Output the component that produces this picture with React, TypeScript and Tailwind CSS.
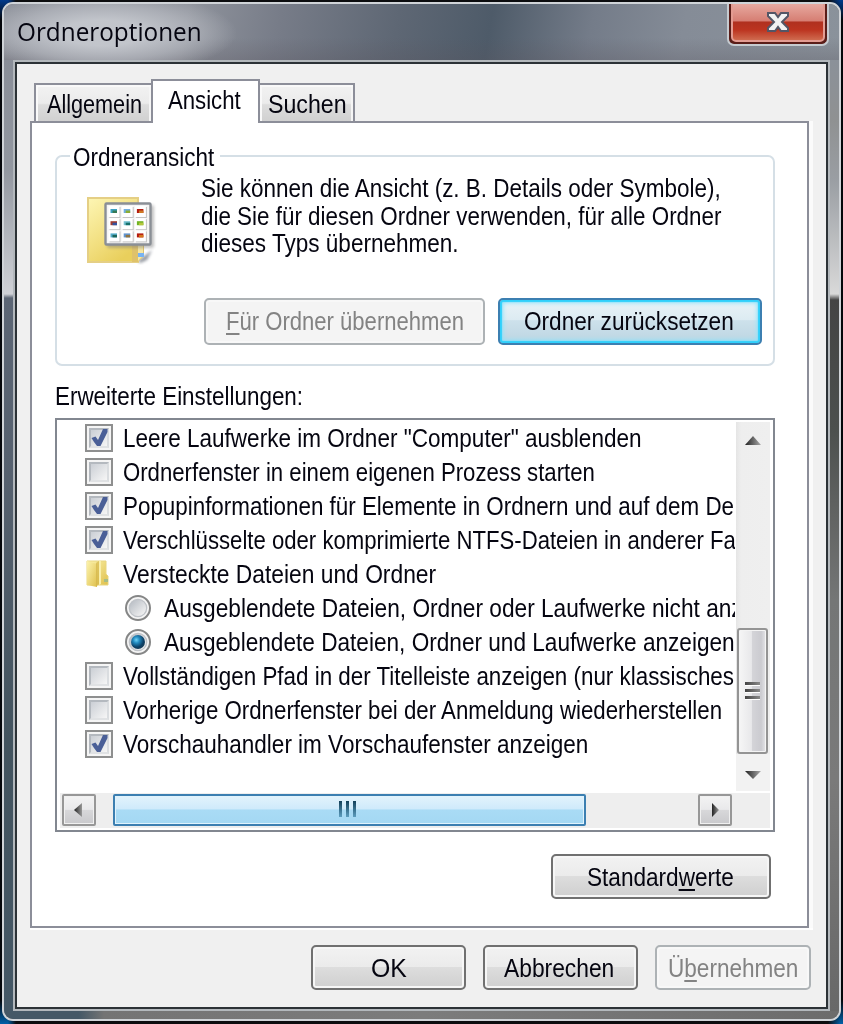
import React, { useLayoutEffect, useRef } from "react";

/** Single line of text condensed or stretched to fill the width of its box. */
function Fit({ className, children }: { className: string; children: React.ReactNode }) {
  const box = useRef<HTMLSpanElement>(null);
  const text = useRef<HTMLSpanElement>(null);
  useLayoutEffect(() => {
    if (box.current && text.current) {
      const scale = box.current.clientWidth / text.current.offsetWidth;
      text.current.style.transform = `scaleX(${scale})`;
    }
  }, []);
  return (
    <span ref={box} className={`block shrink-0 whitespace-nowrap ${className}`}>
      <span ref={text} className="inline-block origin-left">
        {children}
      </span>
    </span>
  );
}

function Key({ children }: { children: React.ReactNode }) {
  return <span className="underline decoration-2 underline-offset-[3px]">{children}</span>;
}

function Button({
  className,
  textClass,
  disabled = false,
  focused = false,
  children,
}: {
  className: string;
  textClass: string;
  disabled?: boolean;
  focused?: boolean;
  children: React.ReactNode;
}) {
  const look = disabled
    ? "border-[#adb2b5] bg-[#f4f4f4] text-[#838383] shadow-[inset_0_0_0_2px_#f8f8f8]"
    : focused
      ? "border-[#3c7fb1] bg-[linear-gradient(#eaf3f7_0%,#dcebf2_46%,#cde1eb_48%,#bcd5e2_100%)] shadow-[inset_0_0_1px_2px_#2fd0fb,inset_0_0_4px_3px_#8fe2fb]"
      : "border-[#707070] bg-[linear-gradient(#f2f2f2_0%,#ebebeb_48%,#dddddd_50%,#cfcfcf_100%)] shadow-[inset_0_0_0_2px_#f6f6f6]";
  return (
    <button disabled={disabled} className={`flex shrink-0 items-center justify-center rounded-[5px] border-2 ${look} ${className}`}>
      <Fit className={textClass}>{children}</Fit>
    </button>
  );
}

function Checkbox({ checked }: { checked: boolean }) {
  return (
    <span className="block size-7 shrink-0 border-2 border-[#8e8f8f] bg-[#f5f5f5] p-[2px]">
      <span className="block size-5 border-2 border-t-[#b4b9bf] border-l-[#b4b9bf] border-r-[#dadde0] border-b-[#e0e2e4] bg-[linear-gradient(135deg,#cbcfd5,#f6f6f6)]">
        {checked && (
          <svg viewBox="0 0 16 16" className="size-4 overflow-visible">
            <path d="M0.500 8L4.500 6.500L7 10L12 -1H16.500V2L9.500 16H6L3 12Z" fill="#4a5f97" />
          </svg>
        )}
      </span>
    </span>
  );
}

function Radio({ checked }: { checked: boolean }) {
  return (
    <svg viewBox="0 0 26 26" className="size-[26px] shrink-0">
      <defs>
        <linearGradient id="well" x1="0" y1="0" x2="1" y2="1">
          <stop offset="0.1" stopColor="#b9bec5" />
          <stop offset="0.9" stopColor="#f4f4f4" />
        </linearGradient>
        <radialGradient id="dot" cx="0.38" cy="0.35" r="0.65">
          <stop offset="0" stopColor="#70d4f7" />
          <stop offset="0.35" stopColor="#238bc0" />
          <stop offset="0.8" stopColor="#0c3f65" />
          <stop offset="1" stopColor="#163e59" />
        </radialGradient>
      </defs>
      <circle cx="13" cy="13" r="12" fill="#f5f5f5" stroke="#858686" strokeWidth="2" />
      <circle cx="13" cy="13" r="8.7" fill="url(#well)" stroke="#bfc3c8" strokeWidth="1.3" />
      {checked && <circle cx="13" cy="13" r="7" fill="url(#dot)" />}
    </svg>
  );
}

function SmallFolder() {
  return (
    <svg viewBox="0 0 24 28" className="ml-px h-7 w-6 shrink-0">
      <defs>
        <linearGradient id="sf" x1="0" y1="0" x2="1" y2="1">
          <stop offset="0" stopColor="#fcf3ad" />
          <stop offset="1" stopColor="#dfc04c" />
        </linearGradient>
      </defs>
      <path d="M1 1H20V14L22 16V25H1Z" fill="url(#sf)" stroke="#e8d680" />
      <path d="M1 1L11 4V27L1 25Z" fill="url(#sf)" />
      <path d="M10 3L13 1V24L10 27Z" fill="#d3b347" opacity=".65" />
      <path d="M13 1H15V24L13 25Z" fill="#f9efab" />
      <path d="M18 19H22V22H18Z" fill="#a6bd86" />
    </svg>
  );
}

const thumbs = [
  ["#3aa0c0", "#357a55"], ["#72aee0", "#8cae34"], ["#b41a10", "#cf7a24"],
  ["#a03c30", "#3454a0"], ["#74c0d0", "#16706a"], ["#6fb324", "#b6c63c"],
  ["#55abc8", "#1c665a"], ["#6295cf", "#907440"], ["#b41a10", "#d4751c"],
];

function FolderViewIcon() {
  return (
    <svg viewBox="0 0 72 76" className="h-[76px] w-[72px] overflow-visible">
      <defs>
        <linearGradient id="fv" x1="0" y1="0" x2="0.6" y2="1">
          <stop offset="0" stopColor="#fdf6b4" />
          <stop offset="0.6" stopColor="#f2df80" />
          <stop offset="1" stopColor="#e9cf5c" />
        </linearGradient>
        <filter id="soft"><feGaussianBlur stdDeviation="1.6" /></filter>
      </defs>
      <path d="M52 66L66 55L61 65L54 68Z" fill="#6f7680" opacity=".75" filter="url(#soft)" />
      <path d="M2 3H52V67H2Z" fill="url(#fv)" stroke="#e5cf85" strokeWidth="2" />
      <path d="M46 50H58V61L52 67H46Z" fill="#dfc26a" />
      <path d="M52 50H57V61L52 66Z" fill="#f5e7a5" />
      <path d="M52 58H58V62H52Z" fill="#79b3f1" />
      <rect x="21" y="10" width="47" height="43" rx="2" fill="#777" opacity=".45" filter="url(#soft)" />
      <rect x="19.5" y="8.5" width="45" height="41" rx="1" fill="#f5f5f5" stroke="#8a8f96" strokeWidth="2.4" />
      {thumbs.map(([a, b], i) => {
        const x = 22.5 + (i % 3) * 13.2;
        const y = 11 + Math.floor(i / 3) * 12.2;
        return (
          <g key={i}>
            <rect x={x + 1} y={y + 1} width="11" height="11" fill="#c4c4c4" />
            <rect x={x} y={y} width="11" height="11" fill="#fff" />
            <rect x={x + 2} y={y + 3} width="6.500" height="4" fill={a} />
            <rect x={x + 4} y={y + 4.500} width="4.500" height="2.500" fill={b} />
          </g>
        );
      })}
    </svg>
  );
}

type Row = { kind: "check" | "folder" | "radio"; on?: boolean; width: string; text: string };

const rows: Row[] = [
  { kind: "check", on: true, width: "w-[519px]", text: 'Leere Laufwerke im Ordner "Computer" ausblenden' },
  { kind: "check", width: "w-[472px]", text: "Ordnerfenster in einem eigenen Prozess starten" },
  { kind: "check", on: true, width: "w-[611px]", text: "Popupinformationen für Elemente in Ordnern und auf dem De" },
  { kind: "check", on: true, width: "w-[613px]", text: "Verschlüsselte oder komprimierte NTFS-Dateien in anderer Fa" },
  { kind: "folder", width: "w-[313px]", text: "Versteckte Dateien und Ordner" },
  { kind: "radio", width: "w-[579px]", text: "Ausgeblendete Dateien, Ordner oder Laufwerke nicht anz" },
  { kind: "radio", on: true, width: "w-[571px]", text: "Ausgeblendete Dateien, Ordner und Laufwerke anzeigen" },
  { kind: "check", width: "w-[611px]", text: "Vollständigen Pfad in der Titelleiste anzeigen (nur klassisches" },
  { kind: "check", width: "w-[599px]", text: "Vorherige Ordnerfenster bei der Anmeldung wiederherstellen" },
  { kind: "check", on: true, width: "w-[465px]", text: "Vorschauhandler im Vorschaufenster anzeigen" },
];

function SettingRow({ row }: { row: Row }) {
  if (row.kind === "radio") {
    return (
      <div className="flex h-[34px] items-center gap-[13px] pl-[68px]">
        <Radio checked={!!row.on} />
        <Fit className={row.width}>{row.text}</Fit>
      </div>
    );
  }
  return (
    <div className="flex h-[34px] items-center pl-7">
      <span className="w-[38px] shrink-0">{row.kind === "folder" ? <SmallFolder /> : <Checkbox checked={!!row.on} />}</span>
      <Fit className={row.width}>{row.text}</Fit>
    </div>
  );
}

function ArrowButton({ d }: { d: string }) {
  return (
    <div className="flex h-8 w-[34px] shrink-0 items-center justify-center rounded-[2px] border-2 border-[#979797] bg-[linear-gradient(#f3f3f3_0%,#e9e9eb_48%,#d8d8da_50%,#c9c9cc_100%)] shadow-[inset_0_0_0_1px_#f0f0f0]">
      <svg viewBox="0 0 16 16" className="-ml-[3px] size-4">
        <defs>
          <linearGradient id="arr"><stop stopColor="#222" /><stop offset="1" stopColor="#999" /></linearGradient>
        </defs>
        <path d={d} fill="url(#arr)" />
      </svg>
    </div>
  );
}

function AdvancedList() {
  return (
    <div className="flex h-[414px] w-[720px] flex-col border-2 border-[#828790] bg-white">
      <div className="flex h-[373px]">
        <div className="w-[678px] shrink-0 overflow-hidden pt-px">
          {rows.map((row) => (
            <SettingRow key={row.text} row={row} />
          ))}
        </div>
        <div className="mt-[2px] ml-px flex h-[369px] w-[34px] flex-col bg-[linear-gradient(90deg,#e5e5e5,#eeeeee_15%,#efefef)]">
          <div className="flex h-[206px] justify-center pt-[14px]">
            <svg viewBox="0 0 16 10" className="h-[10px] w-4">
              <defs><linearGradient id="up"><stop stopColor="#222" /><stop offset="1" stopColor="#aaa" /></linearGradient></defs>
              <path d="M8 0L16 9H0Z" fill="url(#up)" />
            </svg>
          </div>
          <div className="ml-px flex h-[126px] w-[31px] flex-col items-center justify-center gap-[3px] rounded-[3px] border-2 border-[#949494] bg-[linear-gradient(90deg,#f6f6f6_0%,#e8e8ea_46%,#d4d4d8_50%,#cbcbd0_82%,#e6e6e9_100%)] shadow-[inset_0_0_0_1px_#f4f4f4]">
            <span className="h-1 w-[15px] border-b border-b-white bg-[linear-gradient(90deg,#444,#8a8a8a)]" />
            <span className="h-1 w-[15px] border-b border-b-white bg-[linear-gradient(90deg,#444,#8a8a8a)]" />
            <span className="h-1 w-[15px] border-b border-b-white bg-[linear-gradient(90deg,#444,#8a8a8a)]" />
          </div>
          <div className="flex grow items-center justify-center bg-[#f2f2f2] pt-1">
            <svg viewBox="0 0 16 10" className="h-[10px] w-4">
              <path d="M0 1H16L8 9Z" fill="url(#up)" />
            </svg>
          </div>
        </div>
      </div>
      <div className="mx-[3px] flex h-[35px] items-center bg-[#eeeeee] pb-px pl-[2px]">
        <ArrowButton d="M12 1V15L4 8Z" />
        <div className="ml-[17px] flex h-8 w-[473px] items-center justify-center gap-[4px] rounded-[2px] border-2 border-[#3c7fb1] bg-[linear-gradient(#e2f3fc_0%,#cfeafb_46%,#a9dbf5_50%,#a4d8f3_100%)] pr-1 pb-[2px] shadow-[inset_0_0_0_1px_#e0f3fd]">
          <span className="h-4 w-[3px] bg-[linear-gradient(#12405a,#5c9dbe)]" />
          <span className="h-4 w-[3px] bg-[linear-gradient(#12405a,#5c9dbe)]" />
          <span className="h-4 w-[3px] bg-[linear-gradient(#12405a,#5c9dbe)]" />
        </div>
        <div className="w-[112px]" />
        <ArrowButton d="M6 1V15L13 8Z" />
      </div>
    </div>
  );
}

const tabFill = "bg-[linear-gradient(#f2f2f2_0%,#ebebeb_48%,#dddddd_52%,#cfcfcf_100%)] shadow-[inset_2px_2px_0_#f9f9f9,inset_-2px_0_0_#f5f5f5]";

export default function App() {
  return (
    <div className="h-[1024px] w-[843px] overflow-hidden bg-[linear-gradient(180deg,#003a8c_0,#05070b_20px,#05070b_1000px,#0060a8_1024px)] font-['Liberation_Sans',Arial,sans-serif] text-[25.5px] leading-[28px] text-[#050510]">
      <div className="h-full bg-[linear-gradient(90deg,transparent_8px,#0c0d0f_16px,#0c0d0f_828px,transparent_840px)] px-[2px] pt-[2px] pb-[3px]">
        <div className="relative flex h-[1019px] flex-col overflow-hidden rounded-[11px] border-2 border-[#d0d4d8] bg-[#747474]">
          <header className="flex h-14 shrink-0 items-center bg-[radial-gradient(ellipse_135px_42px_at_98px_29px,#c6c9cfee_30%,#b9bcc3aa_65%,transparent_100%),linear-gradient(180deg,transparent_60%,#58535c44_100%),linear-gradient(100deg,#8b8f98_0%,#8f939c_22%,#777c88_33%,#5e6774_47%,#4e5b69_58%,#747c89_70%,#858c97_81%,#8a929b_100%)] pb-[3px] pl-[13px] font-['Open_Sans','Noto_Sans',sans-serif] text-[25.5px]">
            <Fit className="w-[185px]">Ordneroptionen</Fit>
          </header>
          <button
            aria-label="Schließen"
            className="absolute -top-[2px] left-[723px] h-[44px] w-[102px] rounded-b-[7px] border-2 border-t-0 border-[#c6cbd0] bg-[#5a1d18] px-[2px] pb-[2px]"
          >
            <span className="flex h-full items-center justify-center rounded-b-[5px] border-2 border-[#e39c92] bg-[linear-gradient(#e7a9a0_0%,#d67e73_47%,#b0301f_50%,#bc3420_72%,#cf6b4f_100%)] pb-[1px]">
              <svg viewBox="0 0 24 22" className="h-[22px] w-6">
                <path d="M2 2H9L12 6L15 2H22V5L16 11L22 17V20H15L12 16L9 20H2V17L8 11L2 5Z" fill="#f2f2f2" stroke="#535666" strokeWidth="2" />
              </svg>
            </span>
          </button>
          <div className="flex h-[951px]">
            <div className="w-[9px] shrink-0 bg-[linear-gradient(#898e98_0,#9297a0_110px,#cfd1d6_234px,#5c6675_238px,#56616f_420px,#43545f_680px,#455866_951px)]" />
            <div className="w-[817px] shrink-0 border-2 border-[#b3b8bc]">
              <main className="flex h-[947px] flex-col border-2 border-[#2c3236] bg-[#f0f0f0] pt-[15px] pl-[13px]">
                <nav className="flex h-11 shrink-0 items-end pl-1">
                  <div className={`flex h-10 w-[119px] items-center border-2 border-b-0 border-[#8c8e99] pl-[11px] ${tabFill}`}>
                    <Fit className="w-[95px]">Allgemein</Fit>
                  </div>
                  <div className="relative -mx-[2px] flex h-11 w-[109px] items-center border-2 border-b-0 border-[#8c8e99] bg-white pb-1 pl-[15px]">
                    <Fit className="w-[73px]">Ansicht</Fit>
                  </div>
                  <div className={`flex h-10 w-[97px] items-center border-2 border-b-0 border-[#8c8e99] pl-[8px] ${tabFill}`}>
                    <Fit className="w-[79px]">Suchen</Fit>
                  </div>
                </nav>
                <section className="-mt-[2px] flex h-[807px] w-[779px] shrink-0 flex-col border-2 border-[#8c8e99] bg-white pt-[18px] pl-[23px] shadow-[4px_0_0_#fbfbfb,0_2px_0_#ffffff,4px_2px_0_#ffffff]">
                  <fieldset className="h-[225px] w-[720px] shrink-0 rounded-[7px] border-2 border-[#d5dfe6]">
                    <legend className="ml-[13px] h-[30px] pr-[6px] pl-[3px]">
                      <Fit className="w-[141px] leading-[32px]">Ordneransicht</Fit>
                    </legend>
                    <div className="flex h-[127px] pt-[4px] pl-[29px]">
                      <div className="w-[115px] pt-[20px]">
                        <FolderViewIcon />
                      </div>
                      <div className="flex flex-col leading-[27.5px]">
                        <Fit className="w-[520px]">Sie können die Ansicht (z. B. Details oder Symbole),</Fit>
                        <Fit className="w-[520px]">die Sie für diesen Ordner verwenden, für alle Ordner</Fit>
                        <Fit className="w-[258px]">dieses Typs übernehmen.</Fit>
                      </div>
                    </div>
                    <div className="flex gap-[13px] pl-[147px]">
                      <Button disabled className="h-[47px] w-[281px]" textClass="w-[238px] -mt-px">
                        <Key>F</Key>ür Ordner übernehmen
                      </Button>
                      <Button focused className="h-[47px] w-[264px]" textClass="w-[210px] -mt-px -ml-[2px]">
                        Ordner zurücksetzen
                      </Button>
                    </div>
                  </fieldset>
                  <Fit className="mt-[16px] mb-[8px] w-[248px]">Erweiterte Einstellungen:</Fit>
                  <AdvancedList />
                  <div className="flex pt-[22px] pl-[496px]">
                    <Button className="h-[45px] w-[220px]" textClass="w-[147px] -ml-[2px]">
                      Standard<Key>w</Key>erte
                    </Button>
                  </div>
                </section>
                <footer className="flex gap-[17px] pt-[17px] pl-[281px]">
                  <Button className="h-[45px] w-[155px]" textClass="w-[36px]">
                    OK
                  </Button>
                  <Button className="h-[45px] w-[155px]" textClass="w-[110px] -ml-[3px]">
                    Abbrechen
                  </Button>
                  <Button disabled className="h-[45px] w-[156px]" textClass="w-[130px]">
                    Ü<Key>b</Key>ernehmen
                  </Button>
                </footer>
              </main>
            </div>
            <div className="w-[9px] shrink-0 bg-[linear-gradient(#8b9199_0,#8f9192_60px,#9a9ea3_120px,#d9d9d9_234px,#444444_240px,#4c504e_370px,#5e605f_440px,#747676_540px,#7a7a7a_720px,#686868_951px)]" />
          </div>
          <div className="grow bg-[linear-gradient(90deg,#455866_0,#455866_75px,#747474_100px,#7c7c7c_420px,#6c6c6c_835px)]" />
        </div>
      </div>
    </div>
  );
}
